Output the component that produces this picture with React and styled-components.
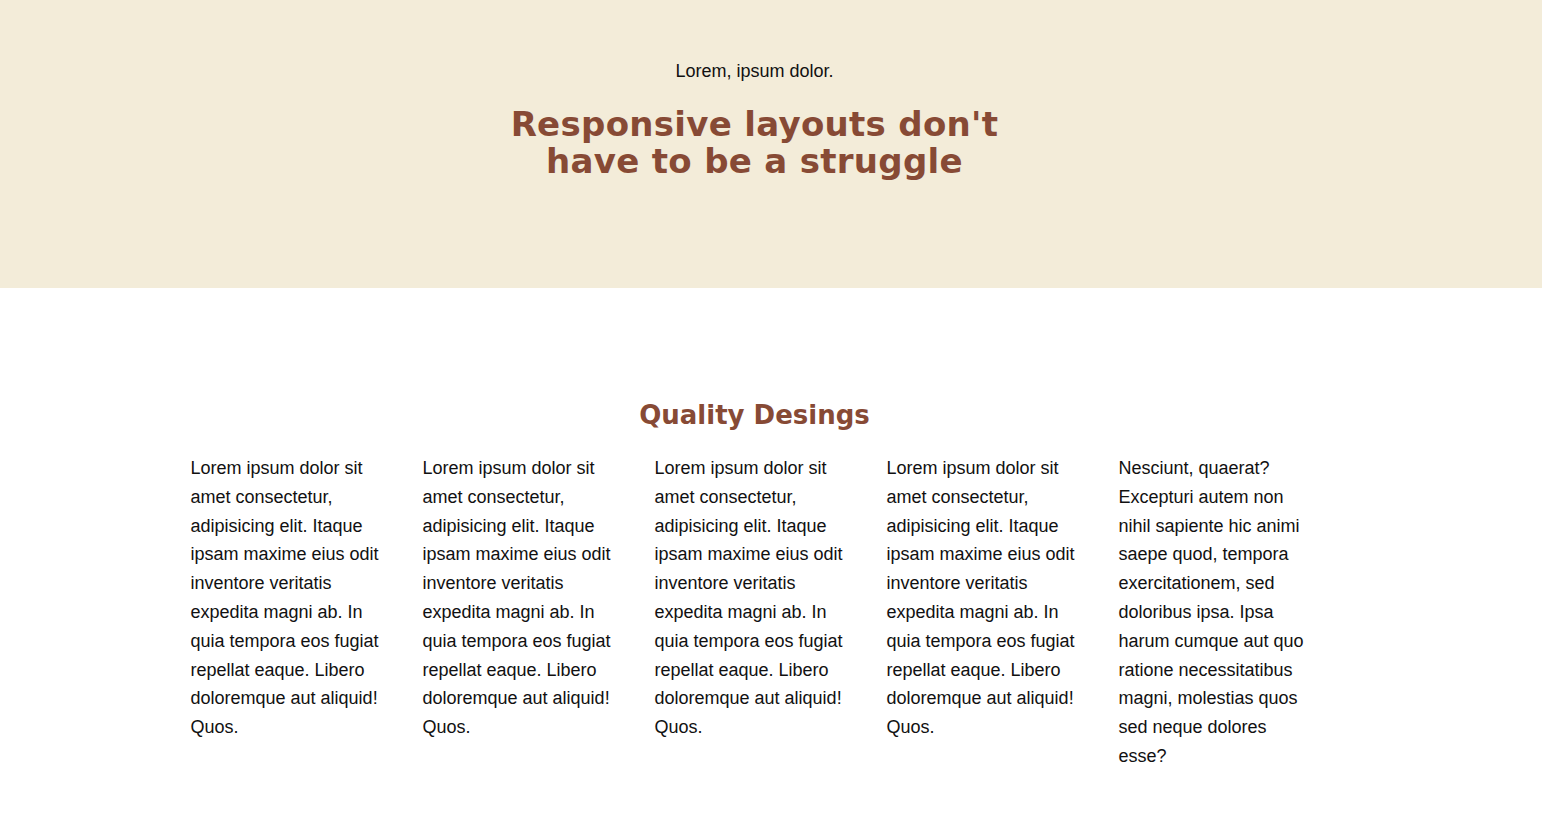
import React from 'react'
import styled, { createGlobalStyle } from 'styled-components'

const GlobalStyle = createGlobalStyle`
    * {
        box-sizing: border-box;
    }

    body {
        margin: 0;
        font-family: "Liberation Sans", Arial, sans-serif;
        color: #111;
        background: #fff;
    }
`;

const columns = [
    'Lorem ipsum dolor sit amet consectetur, adipisicing elit. Itaque ipsam maxime eius odit inventore veritatis expedita magni ab. In quia tempora eos fugiat repellat eaque. Libero doloremque aut aliquid! Quos.',
    'Lorem ipsum dolor sit amet consectetur, adipisicing elit. Itaque ipsam maxime eius odit inventore veritatis expedita magni ab. In quia tempora eos fugiat repellat eaque. Libero doloremque aut aliquid! Quos.',
    'Lorem ipsum dolor sit amet consectetur, adipisicing elit. Itaque ipsam maxime eius odit inventore veritatis expedita magni ab. In quia tempora eos fugiat repellat eaque. Libero doloremque aut aliquid! Quos.',
    'Lorem ipsum dolor sit amet consectetur, adipisicing elit. Itaque ipsam maxime eius odit inventore veritatis expedita magni ab. In quia tempora eos fugiat repellat eaque. Libero doloremque aut aliquid! Quos.',
    'Nesciunt, quaerat? Excepturi autem non nihil sapiente hic animi saepe quod, tempora exercitationem, sed doloribus ipsa. Ipsa harum cumque aut quo ratione necessitatibus magni, molestias quos sed neque dolores esse?',
]

const App = () => {
    return (
        <>
            <GlobalStyle />
            <Hero>
                <Inner>
                    <Eyebrow>Lorem, ipsum dolor.</Eyebrow>
                    <HeroTitle>
                        Responsive layouts don't<br />have to be a struggle
                    </HeroTitle>
                </Inner>
            </Hero>
            <Section>
                <Inner>
                    <SectionTitle>Quality Desings</SectionTitle>
                    <Grid>
                        {columns.map((text, i) => (
                            <Column key={i}>{text}</Column>
                        ))}
                    </Grid>
                </Inner>
            </Section>
        </>
    )
}

export default App

const Hero = styled.header`
    background: #f3ecd9;
    height: 288px;
    padding-top: 60px;
`;

const Inner = styled.div`
    padding-right: 33px;
    display: flex;
    flex-direction: column;
    align-items: center;
`;

const Eyebrow = styled.p`
    margin: 0;
    font-size: 18px;
    line-height: 22px;
    color: #111;
`;

const HeroTitle = styled.h1`
    margin: 24px 0 0;
    font-family: "DejaVu Sans", "Liberation Sans", sans-serif;
    font-weight: 700;
    font-size: 34px;
    line-height: 37px;
    letter-spacing: 0.3px;
    text-align: center;
    color: #874a35;
`;

const Section = styled.section`
    padding-top: 110px;
    padding-bottom: 40px;
`;

const SectionTitle = styled.h2`
    margin: 0;
    font-family: "DejaVu Sans", "Liberation Sans", sans-serif;
    font-weight: 700;
    font-size: 26px;
    line-height: 34px;
    color: #874a35;
`;

const Grid = styled.div`
    display: grid;
    grid-template-columns: repeat(5, 200px);
    column-gap: 32px;
    margin-top: 22px;
`;

const Column = styled.p`
    margin: 0;
    font-size: 18px;
    line-height: 28.8px;
    color: #111;
`;
